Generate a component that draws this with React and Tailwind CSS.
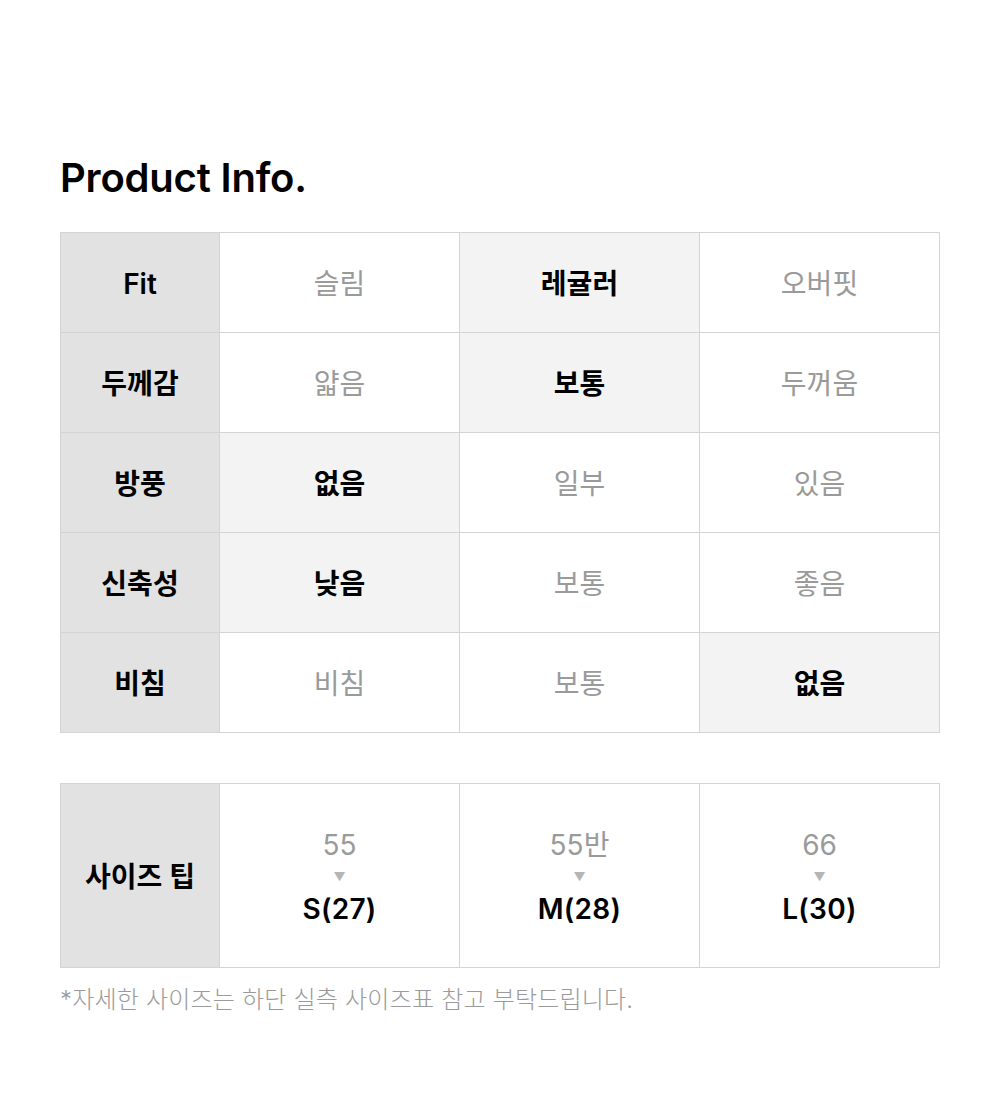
import React from "react";

const rows = [
  { label: "Fit", values: ["슬림", "레귤러", "오버핏"], active: 1 },
  { label: "두께감", values: ["얇음", "보통", "두꺼움"], active: 1 },
  { label: "방풍", values: ["없음", "일부", "있음"], active: 0 },
  { label: "신축성", values: ["낮음", "보통", "좋음"], active: 0 },
  { label: "비침", values: ["비침", "보통", "없음"], active: 2 },
];

const sizes = [
  { from: "55", to: "S(27)" },
  { from: "55반", to: "M(28)" },
  { from: "66", to: "L(30)" },
];

const font = { fontFamily: '"Inter", "Noto Sans CJK KR", sans-serif' };

export default function App() {
  return (
    <div className="min-h-[1110px] bg-white px-[60px] pt-[150px]" style={font}>
      <h1 className="text-[40px] leading-[56px] font-semibold tracking-[-0.2px] text-black">
        Product Info.
      </h1>

      <div className="mt-[26px] grid grid-cols-[159px_240px_240px_240px] border-t border-l border-[#d4d4d4]">
        {rows.map((row) => (
          <React.Fragment key={row.label}>
            <div className="h-[100px] flex items-center justify-center pt-[2px] bg-[#e2e2e2] border-r border-b border-[#d4d4d4] text-[28px] font-semibold text-black">
              {row.label}
            </div>
            {row.values.map((v, i) => (
              <div
                key={i}
                className={
                  i === row.active
                    ? "h-[100px] flex items-center justify-center pt-[2px] bg-[#f3f3f3] border-r border-b border-[#d4d4d4] text-[28px] font-semibold text-black"
                    : "h-[100px] flex items-center justify-center pt-[2px] bg-white border-r border-b border-[#d4d4d4] text-[28px] text-[#9a9a9a]"
                }
              >
                {v}
              </div>
            ))}
          </React.Fragment>
        ))}
      </div>

      <div className="mt-[50px] grid grid-cols-[159px_240px_240px_240px] border-t border-l border-[#d4d4d4]">
        <div className="h-[184px] flex items-center justify-center pt-[2px] bg-[#e2e2e2] border-r border-b border-[#d4d4d4] text-[28px] font-semibold text-black">
          사이즈 팁
        </div>
        {sizes.map((s) => (
          <div
            key={s.to}
            className="h-[184px] flex flex-col items-center justify-center pt-[2px] border-r border-b border-[#d4d4d4]"
          >
            <div className="text-[28px] leading-[34px] text-[#9a9a9a]">{s.from}</div>
            <div className="text-[12px] leading-[30px] text-[#b5b5b5]">▼</div>
            <div className="text-[28px] leading-[34px] font-semibold text-black tracking-[0.3px]">{s.to}</div>
          </div>
        ))}
      </div>

      <p className="mt-[16px] text-[24px] leading-[32px] font-light tracking-[0.2px] text-[#9a9a9a]">
        *자세한 사이즈는 하단 실측 사이즈표 참고 부탁드립니다.
      </p>
    </div>
  );
}
